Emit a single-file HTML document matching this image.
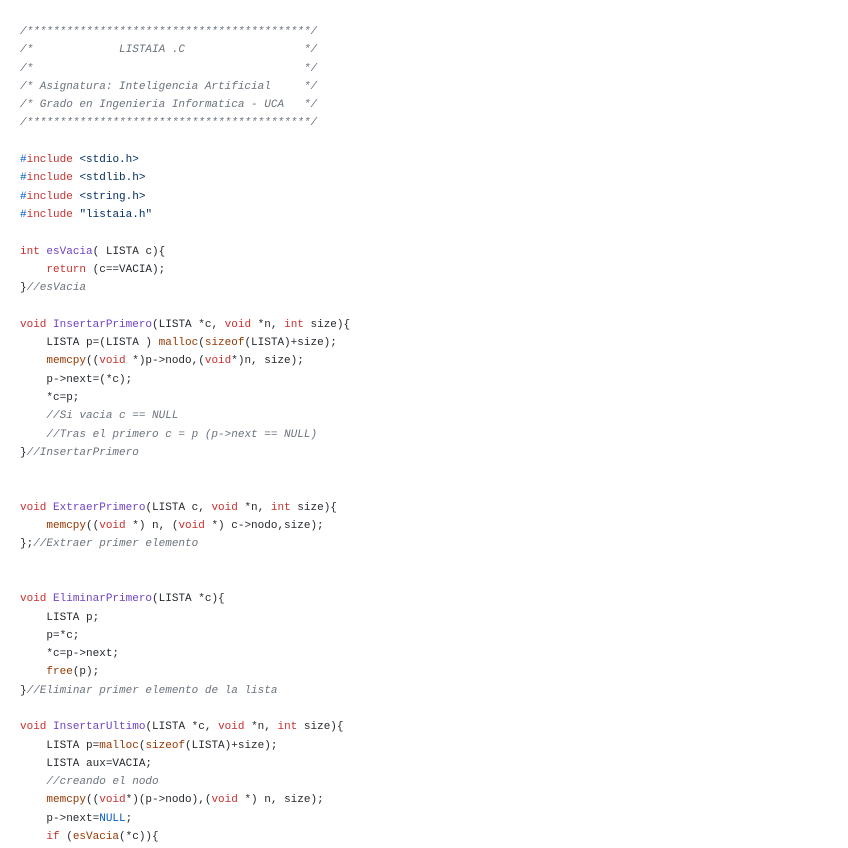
<!DOCTYPE html>
<html><head><meta charset="utf-8"><style>
html,body{margin:0;padding:0;background:#fff;}
pre{margin:0;position:absolute;left:20px;top:23px;font-family:"Liberation Mono",monospace;font-size:11px;line-height:18.3px;color:#24292e;}
.c{color:#6a737d;font-style:italic}
.k{color:#c8302f}
.f{color:#6f42c1}
.b{color:#953800}
.s{color:#032f62}
.p{color:#005cc5}
</style></head><body><pre><span class="c">/*******************************************/
/*             LISTAIA .C                  */
/*                                         */
/* Asignatura: Inteligencia Artificial     */
/* Grado en Ingenieria Informatica - UCA   */
/*******************************************/</span>

<span class="p">#</span><span class="k">include</span> <span class="s">&lt;stdio.h&gt;</span>
<span class="p">#</span><span class="k">include</span> <span class="s">&lt;stdlib.h&gt;</span>
<span class="p">#</span><span class="k">include</span> <span class="s">&lt;string.h&gt;</span>
<span class="p">#</span><span class="k">include</span> <span class="s">"listaia.h"</span>

<span class="k">int</span> <span class="f">esVacia</span>( LISTA c){
    <span class="k">return</span> (c==VACIA);
}<span class="c">//esVacia</span>

<span class="k">void</span> <span class="f">InsertarPrimero</span>(LISTA *c, <span class="k">void</span> *n, <span class="k">int</span> size){
    LISTA p=(LISTA ) <span class="b">malloc</span>(<span class="b">sizeof</span>(LISTA)+size);
    <span class="b">memcpy</span>((<span class="k">void</span> *)p-&gt;nodo,(<span class="k">void</span>*)n, size);
    p-&gt;next=(*c);
    *c=p;
    <span class="c">//Si vacia c == NULL</span>
    <span class="c">//Tras el primero c = p (p-&gt;next == NULL)</span>
}<span class="c">//InsertarPrimero</span>


<span class="k">void</span> <span class="f">ExtraerPrimero</span>(LISTA c, <span class="k">void</span> *n, <span class="k">int</span> size){
    <span class="b">memcpy</span>((<span class="k">void</span> *) n, (<span class="k">void</span> *) c-&gt;nodo,size);
};<span class="c">//Extraer primer elemento</span>


<span class="k">void</span> <span class="f">EliminarPrimero</span>(LISTA *c){
    LISTA p;
    p=*c;
    *c=p-&gt;next;
    <span class="b">free</span>(p);
}<span class="c">//Eliminar primer elemento de la lista</span>

<span class="k">void</span> <span class="f">InsertarUltimo</span>(LISTA *c, <span class="k">void</span> *n, <span class="k">int</span> size){
    LISTA p=<span class="b">malloc</span>(<span class="b">sizeof</span>(LISTA)+size);
    LISTA aux=VACIA;
    <span class="c">//creando el nodo</span>
    <span class="b">memcpy</span>((<span class="k">void</span>*)(p-&gt;nodo),(<span class="k">void</span> *) n, size);
    p-&gt;next=<span class="p">NULL</span>;
    <span class="k">if</span> (<span class="b">esVacia</span>(*c)){
</pre></body></html>
